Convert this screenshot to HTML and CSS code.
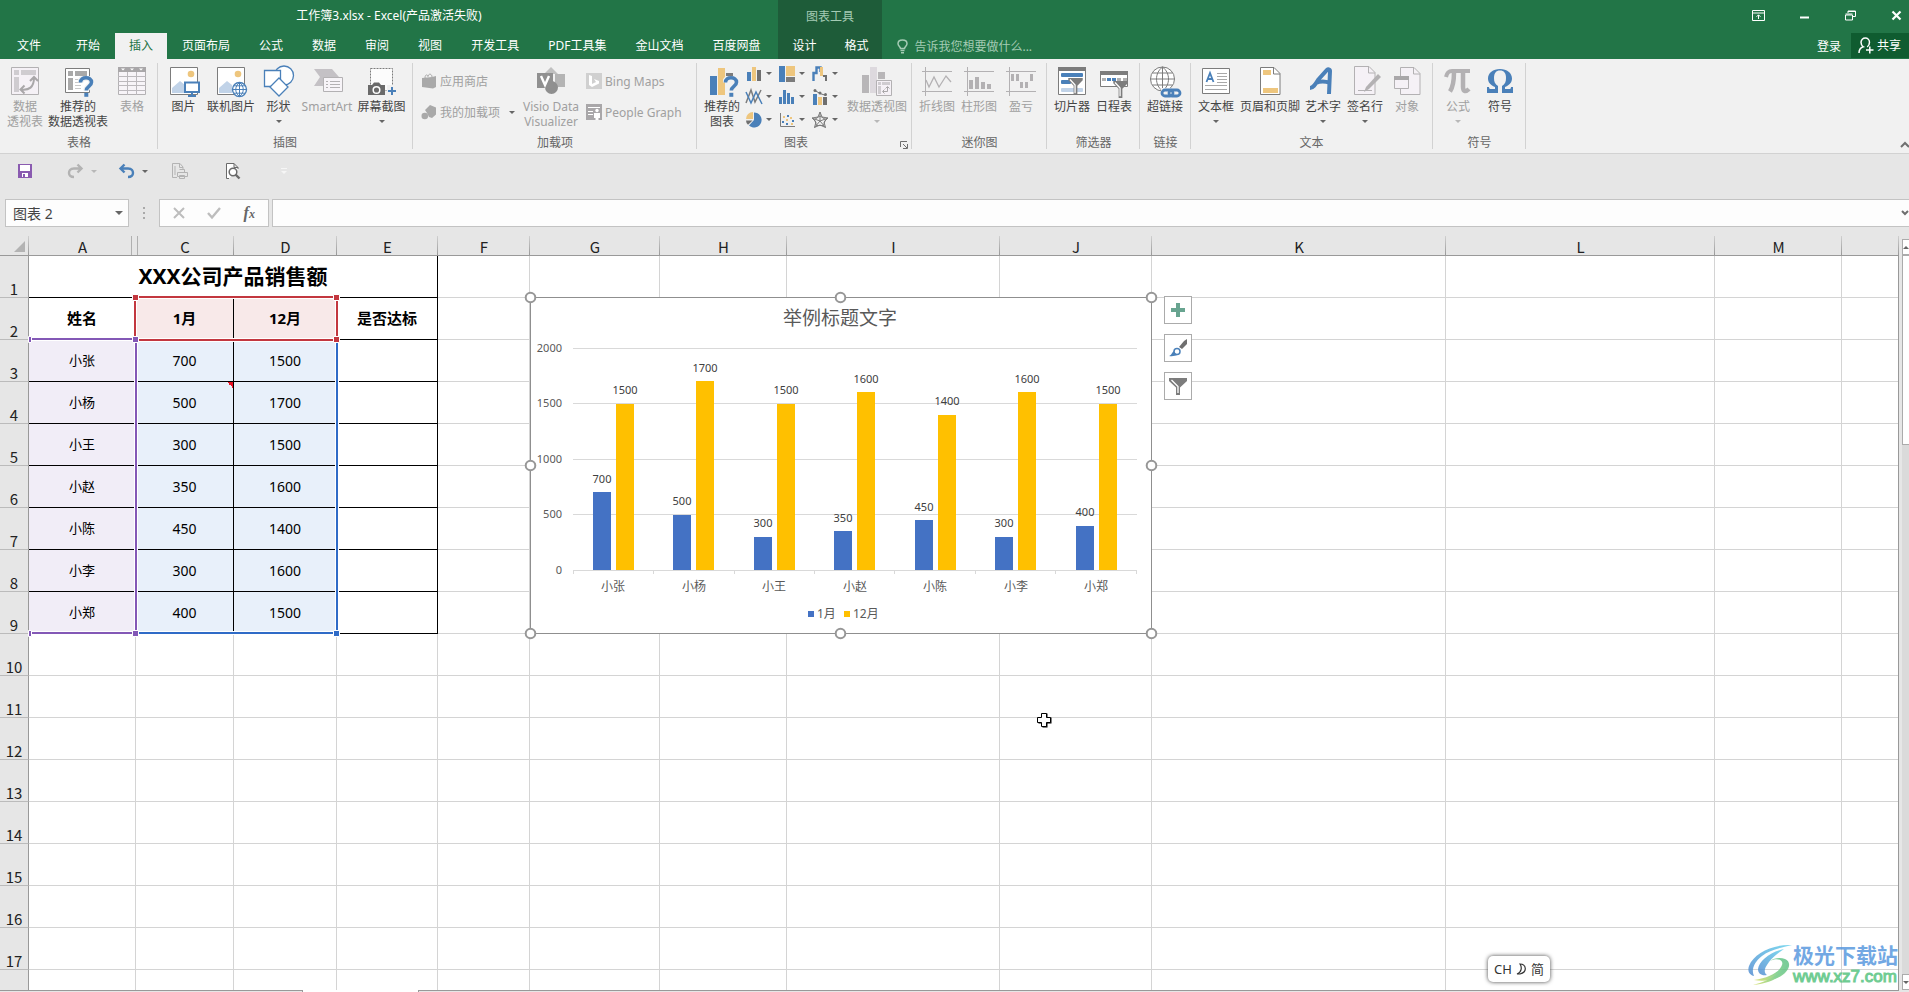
FILE: index.html
```html
<!DOCTYPE html>
<html lang="zh-CN">
<head>
<meta charset="utf-8">
<title>工作簿3.xlsx - Excel</title>
<link rel="stylesheet" href="styles.css">
</head>
<body>
<svg class="defs" aria-hidden="true">
  <defs>
    <symbol id="q" viewBox="0 0 16 21"><path d="M2.500 6.500C2.500 3 5 1.800 8 1.800s5.500 1.400 5.500 4.400c0 4.300-5.200 4-5.200 8.300" fill="none" stroke="#f1f1f1" stroke-width="6"/><path d="M2.500 6.500C2.500 3 5 1.800 8 1.800s5.500 1.400 5.500 4.400c0 4.300-5.200 4-5.200 8.300" fill="none" stroke="#4a80b9" stroke-width="3.600"/><path d="M6.300 16.800h4v4h-4z" fill="#4a80b9"/></symbol>
    <symbol id="funnel" viewBox="0 0 17 20"><path d="M0 0h17v2.500l-6.300 6.500V20H6.300V9L0 2.500z" fill="#7c7c7c"/><path d="M2 1.800l6 6.500V18" fill="none" stroke="#fff" stroke-width="1.500"/></symbol>
  </defs>
</svg>

<header class="top">
  <div class="titlebar">
    <div class="doc-title">工作簿3.xlsx - Excel(产品激活失败)</div>
    <div class="ctx-title">图表工具</div>
    <div class="win">
      <button aria-label="功能区显示选项"><svg width="13" height="11"><path d="M.5.5h12v10H.5zM.5 3h12M6.500 9V5M4.500 6.800l2-2 2 2" fill="none" stroke="#fff"/></svg></button>
      <button aria-label="最小化"><svg width="13" height="11"><path d="M2 6.500h9v2H2z" fill="#fff"/></svg></button>
      <button aria-label="还原"><svg width="13" height="11"><path d="M1.500 5h7v5h-7zM1.500 4h7M4 3V1h7.500v5.500H9M4 1.500h7" fill="none" stroke="#fff"/></svg></button>
      <button aria-label="关闭"><svg width="13" height="11"><path d="M2.500 1.500l8 8M10.500 1.500l-8 8" stroke="#fff" stroke-width="2.200"/></svg></button>
    </div>
  </div>
  <nav class="tabs">
    <button class="tab file">文件</button>
    <button class="tab">开始</button>
    <button class="tab active">插入</button>
    <button class="tab">页面布局</button>
    <button class="tab">公式</button>
    <button class="tab">数据</button>
    <button class="tab">审阅</button>
    <button class="tab">视图</button>
    <button class="tab">开发工具</button>
    <button class="tab">PDF工具集</button>
    <button class="tab">金山文档</button>
    <button class="tab">百度网盘</button>
    <div class="ctx-tabs"><button class="tab">设计</button><button class="tab">格式</button></div>
    <button class="tell"><svg width="11" height="15" viewBox="0 0 11 15"><path d="M3.500 9.500C3.500 7.800 1 7 1 4.700 1 2.400 3 1 5.500 1S10 2.400 10 4.700c0 2.300-2.500 3.100-2.500 4.800zM3.500 11.500h4M4 13.800h3" fill="none" stroke="#a4cbb4" stroke-width="1.500"/></svg><span>告诉我您想要做什么...</span></button>
    <button class="login">登录</button>
    <button class="share"><svg width="16" height="17" viewBox="0 0 16 17"><path d="M1 16c0-3.500 1.800-5.500 4.300-6.200C3.500 8.700 3 7 3 5.300 3 2.700 5 1 7.300 1s4.200 1.700 4.200 4.300c0 1.700-.6 3.500-2.300 4.500M8 13h7.500M11.800 9.500V16.500" fill="none" stroke="#fff" stroke-width="1.500"/></svg><span>共享</span></button>
  </nav>
</header>

<section class="ribbon" aria-label="插入">
  <div class="group g-table">
    <div class="items">
      <button class="big off w42"><svg width="32" height="32"><path d="M2.500 2.500h27v27h-27z" fill="#f5f1f6" stroke="#b3b1b3"/><path d="M5 5h5v5H5zM12 5h15v5H12zM5 12h5v15H5z" fill="#cfccd0"/><path d="M12 24.500c8 1 13-2 13-12M15.500 20.500l-4 4 4 4M21 16l4-4 4 4" fill="none" stroke="#a9a7a9" stroke-width="2"/></svg><span>数据</span><span>透视表</span></button>
      <button class="big w64"><svg width="32" height="32"><path d="M3.500 3.500h24v24h-24z" fill="#fff" stroke="#7c7c7c"/><path d="M6 6h5v5H6zM13 6h12v5H13zM6 13h5v12H6z" fill="#a9a9a9"/><path d="M13 14.500h8M13 17.500h6M13 20.500h6M13 23.500h6" stroke="#c8c8c8"/><use href="#q" x="16" y="11" width="16" height="21"/></svg><span>推荐的</span><span>数据透视表</span></button>
      <button class="big off w44"><svg width="32" height="32"><path d="M2.500 2.500h27v27h-27z" fill="#f7f4f8" stroke="#b3b1b3"/><path d="M2 2h28v5H2z" fill="#a9a7a9"/><path d="M5 3.500h4l-2 2zM14 3.500h4l-2 2zM23 3.500h4l-2 2z" fill="#fff"/><path d="M2 11.500h28M2 16.500h28M2 20.500h28M2 25.500h28M11.500 7v23M20.500 7v23" stroke="#bcb9bd"/></svg><span>表格</span></button>
    </div>
    <div class="glabel">表格</div>
  </div>

  <div class="group g-illus">
    <div class="items">
      <button class="big w45"><svg width="32" height="32"><path d="M2.500 2.500h27v27h-27z" fill="#fff" stroke="#7c7c7c"/><circle cx="23" cy="9" r="3.300" fill="#eec67e"/><path d="M4 28V23l8-7 5 4v8z" fill="#c1d3e8"/><path d="M17 17.500h14v9.500H17z" fill="#fff" stroke="#4a80b9" stroke-width="2"/><path d="M23 28h2v2h3v2h-8v-2h3z" fill="#4a80b9"/></svg><span>图片</span></button>
      <button class="big w50"><svg width="32" height="32"><path d="M2.500 2.500h27v27h-27z" fill="#fff" stroke="#7c7c7c"/><circle cx="23" cy="9" r="3.300" fill="#eec67e"/><path d="M4 28V23l8-7 5 4v8z" fill="#c1d3e8"/><circle cx="24.500" cy="24.500" r="7" fill="#fff" stroke="#4a80b9" stroke-width="1.400"/><path d="M24.500 17.500v14M17.500 24.500h14M19 20.800h11M19 28.200h11M24.500 17.500c-5 4-5 10 0 14M24.500 17.500c5 4 5 10 0 14" fill="none" stroke="#4a80b9"/></svg><span>联机图片</span></button>
      <button class="big w45"><svg width="32" height="32"><circle cx="21" cy="10.500" r="9.500" fill="#fff" stroke="#4a80b9" stroke-width="1.300"/><path d="M1.500 5.500h16v16h-16z" fill="#fff" stroke="#4a80b9" stroke-width="1.300"/><path d="M16 13l9 9-9 9-9-9z" fill="#fff" stroke="#4a80b9" stroke-width="1.300"/></svg><span>形状</span><i class="caret"></i></button>
      <button class="big off w52"><svg width="32" height="32"><path d="M3 4h18l7 8-6 9H3l6-9z" fill="#c4c1c5"/><path d="M12.500 12.500h19v14h-19z" fill="#f7f4f8" stroke="#b3b1b3"/><path d="M15 16.500h2M15 19.500h2M15 22.500h2M19 16.500h10M19 19.500h10M19 22.500h10" stroke="#b3b1b3"/></svg><span>SmartArt</span></button>
      <button class="big w57"><svg width="32" height="32"><path d="M4.500 3.500h22v22h-22z" fill="#fcfcfc" stroke="#7c7c7c" stroke-dasharray="2 1"/><path d="M2 20h4l2-2.500h5l2 2.500h4v10H2z" fill="#6a6a6a"/><circle cx="10.500" cy="25" r="3.300" fill="#6a6a6a" stroke="#fff" stroke-width="1.500"/><path d="M21 20h10v10H21z" fill="#f1f1f1"/><path d="M25 22h2v3h3v2h-3v3h-2v-3h-3v-2h3z" fill="#4a80b9"/></svg><span>屏幕截图</span><i class="caret"></i></button>
    </div>
    <div class="glabel">插图</div>
  </div>

  <div class="group g-addin">
    <div class="items">
      <div class="stack w100">
        <button class="small off"><svg width="16" height="16"><path d="M1 5l10-1 4-1v11l-3 1.500L1 14z" fill="#a9a9a9"/><path d="M4 5c0-4 3-4 3-1M7 3c1-3 4-2 4 1" fill="none" stroke="#a9a9a9"/></svg><span>应用商店</span></button>
        <button class="small off"><svg width="16" height="16"><path d="M9 1l6 2.500v7L11 14l-3-1-2-4-2-3z" fill="#a9a9a9"/><circle cx="3.800" cy="12" r="3.300" fill="#a9a9a9"/></svg><span>我的加载项</span><i class="caret"></i></button>
      </div>
      <button class="big off w60"><svg width="32" height="32"><path d="M16 2l7 7H9z" fill="#c0c0c0"/><path d="M20 9h10v13H20z" fill="#b4b4b4"/><circle cx="16.500" cy="22.500" r="6.500" fill="#8f8f8f"/><path d="M2 8h16v15H2z" fill="#909090"/><path d="M6 11l4 9 4-9" fill="none" stroke="#fff" stroke-width="2.400"/></svg><span>Visio Data</span><span>Visualizer</span></button>
      <div class="stack apps">
        <button class="small off"><svg width="16" height="16"><path d="M0 0h16v16H0z" fill="#d0d0d0"/><path d="M3 2l3 1v8l4-2-2-3 5 2v2.500L6 14l-3-2z" fill="#fff"/></svg><span>Bing Maps</span></button>
        <button class="small off"><svg width="16" height="16"><path d="M0 0h16v16H0z" fill="#a9a7a9"/><path d="M2 3.500h12M2 7.500h5M2 10.500h5" stroke="#fff"/><circle cx="11" cy="6.500" r="1.700" fill="#fff"/><path d="M8 9h6v5h-1.500v2h-3v-2H8z" fill="#fff"/></svg><span>People Graph</span></button>
      </div>
    </div>
    <div class="glabel">加载项</div>
  </div>

  <div class="group g-chart">
    <div class="items">
      <button class="big w44"><svg width="32" height="32"><path d="M4 11h7v19H4z" fill="#4a80b9"/><path d="M12 3h7v27h-7z" fill="#eec67e"/><path d="M20 8h7v5h-7z" fill="#7c7c7c"/><use href="#q" x="17" y="11" width="16" height="21"/></svg><span>推荐的</span><span>图表</span></button>
      <div class="minis">
        <button class="mini" aria-label="柱形图"><svg width="16" height="16"><path d="M1 6h4v9H1z" fill="#4a80b9"/><path d="M6 1h4v14H6z" fill="#eec67e"/><path d="M11 4h4v11h-4z" fill="#6f6f6f"/></svg><i class="caret"></i></button>
        <button class="mini" aria-label="层次结构图"><svg width="16" height="16"><path d="M0 0h6v16H0z" fill="#4a80b9"/><path d="M7 0h9v10H7z" fill="#eec67e"/><path d="M7 11h9v5H7z" fill="#7c7c7c"/></svg><i class="caret"></i></button>
        <button class="mini" aria-label="瀑布图"><svg width="16" height="16"><path d="M1.500 15V7h3V1.500h4V6" fill="none" stroke="#4a80b9" stroke-width="2.400"/><path d="M8 1h3v9H8z" fill="#eec67e"/><path d="M11 9h4v6h-2v-4h-2z" fill="#6f6f6f"/></svg><i class="caret"></i></button>
        <button class="mini" aria-label="折线图"><svg width="16" height="16"><path d="M0 14L5 1l4 12 6-12" fill="none" stroke="#7c7c7c" stroke-width="1.500"/><path d="M0 3l5 11 5-11 6 12" fill="none" stroke="#4a80b9" stroke-width="1.500"/></svg><i class="caret"></i></button>
        <button class="mini" aria-label="直方图"><svg width="16" height="16"><path d="M0 8h3v7H0zM4 1h3v14H4zM8 4h3v11H8zM12 8h3v7h-3z" fill="#4a80b9"/></svg><i class="caret"></i></button>
        <button class="mini" aria-label="组合图"><svg width="16" height="16"><path d="M1 5h4v11H1z" fill="#4a80b9"/><path d="M6 8h4v8H6z" fill="#eec67e"/><path d="M11 8h4v8h-4z" fill="#6f6f6f"/><path d="M3 1.500l5 3 6 2" fill="none" stroke="#6f6f6f"/><circle cx="3" cy="1.500" r="1.500" fill="#6f6f6f"/><circle cx="8" cy="4" r="1.500" fill="#6f6f6f"/><circle cx="13.500" cy="5.500" r="1.500" fill="#6f6f6f"/></svg><i class="caret"></i></button>
        <button class="mini" aria-label="饼图"><svg width="16" height="16"><path d="M8 .5a7.500 7.500 0 1 1-5 13L8 8z" fill="#4a80b9"/><path d="M7 0v7H0a7 7 0 0 1 7-7z" fill="#eec67e"/><path d="M0 8.500h6.500L2 12.800A6 6 0 0 1 0 8.500z" fill="#6f6f6f"/></svg><i class="caret"></i></button>
        <button class="mini" aria-label="散点图"><svg width="16" height="16"><path d="M1.500 1v13.500H16" fill="none" stroke="#7c7c7c"/><path d="M3 9h2v2H3zM8 3h2v2H8zM7 11h2v2H7zM13 8h2v2h-2z" fill="#4a80b9"/><path d="M4 4h2v2H4zM7 7h2v2H7zM11 5h2v2h-2zM12 11h2v2h-2z" fill="#eec67e"/></svg><i class="caret"></i></button>
        <button class="mini" aria-label="雷达图"><svg width="16" height="16"><path d="M8 0v9M0 6l8 3 8-3M2.500 15.500L8 9l5.500 6.500M8 4l5.500 3.500-2 6h-7l-2-6zM8 0l2 5 6 1-4 4 1.500 5.500L8 13l-5.500 2.500L4 10 0 6l6-1z" fill="none" stroke="#7c7c7c"/></svg><i class="caret"></i></button>
      </div>
      <button class="big off w64"><svg width="32" height="32"><path d="M1 10h7v18H1zM17 7h7v7h-7z" fill="#b8b6b8"/><path d="M9 2h7v26H9z" fill="#ddd9de"/><path d="M15.500 15.500h15v15h-15z" fill="#f5f1f6" stroke="#b3b1b3"/><path d="M17 17h3v3h-3zM21 17h8v3h-8zM17 21h3v8h-3z" fill="#cfccd0"/><path d="M22 26.500h4.500V22M23.500 24.500l-2 2 2 2M24.500 23.500l2-2 2 2" fill="none" stroke="#a9a7a9"/></svg><span>数据透视图</span><i class="caret"></i></button>
    </div>
    <div class="glabel">图表</div>
    <button class="launcher" aria-label="图表选项"><svg width="8" height="8"><path d="M.5 6V.5H7M7.500 3v4.500H3M3 3l4 4" fill="none" stroke="#6f6f6f"/></svg></button>
  </div>

  <div class="group g-spark">
    <div class="items">
      <button class="big off w42"><svg width="32" height="32"><path d="M1 6.500h30M1 26.500h30M4.500 2v29" stroke="#b3b1b3"/><path d="M5 22l5-10 5 10 5-10 3 5M5 16l3 6 5-10 5 10 7-11 5 6" fill="none" stroke="none"/><path d="M5 15l3 7 5-10 5 10 7-11 5 6" fill="none" stroke="#b3b1b3" stroke-width="1.300"/></svg><span>折线图</span></button>
      <button class="big off w42"><svg width="32" height="32"><path d="M1 6.500h30M1 26.500h30M4.500 2v29" stroke="#b3b1b3"/><path d="M6 15h4v9H6zM12 12h4v12h-4zM18 17h4v7h-4zM24 19h4v5h-4z" fill="#b3b1b3"/></svg><span>柱形图</span></button>
      <button class="big off w42"><svg width="32" height="32"><path d="M1 6.500h30M1 26.500h30M4.500 2v29" stroke="#b3b1b3"/><path d="M6 9h3v7H6zM11 9h3v7h-3zM15 17h3v6h-3zM20 17h3v6h-3zM25 9h3v7h-3z" fill="#b3b1b3"/></svg><span>盈亏</span></button>
    </div>
    <div class="glabel">迷你图</div>
  </div>

  <div class="group g-filter">
    <div class="items">
      <button class="big w42"><svg width="32" height="32"><path d="M2.500 2.500h27v27h-27z" fill="#fff" stroke="#7c7c7c"/><path d="M2 2h28v4H2z" fill="#7c7c7c"/><rect x="5" y="8" width="22" height="4" rx="1" fill="#4a80b9"/><rect x="5" y="15" width="10" height="4" rx="1" fill="#4a80b9"/><rect x="5" y="23" width="22" height="4" rx="1" fill="#c1d3e8"/><use href="#funnel" x="11" y="13" width="17" height="17"/></svg><span>切片器</span></button>
      <button class="big w42"><svg width="32" height="32"><path d="M2.500 6.500h27v15h-27z" fill="#fff" stroke="#7c7c7c"/><path d="M2 6h28v4H2z" fill="#7c7c7c"/><path d="M4 13h4v3H4zM19 13h4v3h-4zM25 13h4v3h-4z" fill="#b0b0b0"/><path d="M9 13h4v3H9zM14 13h4v3h-4z" fill="#4a80b9"/><use href="#funnel" x="14" y="16" width="17" height="17"/></svg><span>日程表</span></button>
    </div>
    <div class="glabel">筛选器</div>
  </div>

  <div class="group g-link">
    <div class="items">
      <button class="big w42"><svg width="32" height="32"><circle cx="13.500" cy="14" r="12" fill="#fff" stroke="#7c7c7c"/><path d="M13.500 2v24M1.500 14h24M3.500 8h20M3.500 20h20M13.500 2c-8 6-8 18 0 24M13.500 2c8 6 8 18 0 24" fill="none" stroke="#7c7c7c"/><path d="M12 23h20v9H12z" fill="#f1f1f1"/><g fill="none" stroke="#4a80b9" stroke-width="2.800"><rect x="13" y="25" width="11" height="6" rx="3"/><rect x="20" y="25" width="11" height="6" rx="3"/></g></svg><span>超链接</span></button>
    </div>
    <div class="glabel">链接</div>
  </div>

  <div class="group g-text">
    <div class="items">
      <button class="big w44"><svg width="32" height="32"><path d="M2.500 3.500h27v25h-27z" fill="#fff" stroke="#7c7c7c"/><path d="M6.500 17l3.500-9 3.500 9M7.700 14h4.700" fill="none" stroke="#4a80b9" stroke-width="1.800"/><path d="M17 8.500h10M17 11.500h10M17 14.500h10M17 17.500h10M5 20.500h22M5 24.500h22" stroke="#a9a9a9"/></svg><span>文本框</span><i class="caret"></i></button>
      <button class="big w64"><svg width="32" height="32"><path d="M6.500 2.500H20l6 6v21H6.500z" fill="#fff" stroke="#7c7c7c"/><path d="M19.500 2.500V9H26" fill="none" stroke="#7c7c7c"/><path d="M9 5h8v5H9zM9 23h15v5H9z" fill="#eec67e"/></svg><span>页眉和页脚</span></button>
      <button class="big w42"><svg width="32" height="32"><path d="M3 23c3 0 5-3 8-8l9-10c1-1 3-1 3 1l-1 23M9 18c4-2 9-2 14 0" fill="none" stroke="#4a80b9" stroke-width="4"/></svg><span>艺术字</span><i class="caret"></i></button>
      <button class="big w42"><svg width="32" height="32"><path d="M5.500 1.500H20l6 6v22H5.500z" fill="#f5f1f6" stroke="#b3b1b3"/><path d="M19.500 2v6H26M9 25.500h14" fill="none" stroke="#b3b1b3"/><path d="M29 9l3 3-12 12-5 3 2-5z" fill="#b3b1b3"/></svg><span>签名行</span><i class="caret"></i></button>
      <button class="big off w42"><svg width="32" height="32"><path d="M9.500 2.500H23l6 6v21H9.500z" fill="#f5f1f6" stroke="#b3b1b3"/><path d="M22.500 3v6H29" fill="none" stroke="#b3b1b3"/><path d="M3.500 11.500h14v12h-14z" fill="#f5f1f6" stroke="#b3b1b3"/><path d="M3 11h15v4H3z" fill="#a9a7a9"/></svg><span>对象</span></button>
    </div>
    <div class="glabel">文本</div>
  </div>

  <div class="group g-symbol">
    <div class="items">
      <button class="big off w42"><svg width="32" height="32"><path d="M4 12c1-5 3-6 6-6h18" fill="none" stroke="#b3b1b3" stroke-width="4"/><path d="M12 7c0 9-1 15-4 19.500M21 7v15c0 5 3 5 6 2" fill="none" stroke="#b3b1b3" stroke-width="4.500"/></svg><span>公式</span><i class="caret"></i></button>
      <button class="big w42"><svg width="32" height="32"><path d="M3 22h2c0 2 1 2 2 2h4v-2C6 20 4 17 4 13.500 4 8 9 4 16 4s12 4 12 9.500C28 17 26 20 21 22v2h4c1 0 2 0 2-2h2v6H18v-7c3-2 4-4 4-8 0-5-2-7.500-6-7.500s-6 2.500-6 7.500c0 4 1 6 4 8v7H3z" fill="#4a80b9"/></svg><span>符号</span></button>
    </div>
    <div class="glabel">符号</div>
  </div>
  <button class="collapse" aria-label="折叠功能区"><svg width="8" height="6"><path d="M0 5l4-4 4 4" fill="none" stroke="#6f6f6f" stroke-width="2"/></svg></button>
</section>

<section class="qat">
  <button aria-label="保存" class="q-save"><svg width="14" height="14"><path d="M0 0h14v14H0z" fill="#8a5bb0"/><path d="M2 1h10v6H2zM4 9h6v4H4z" fill="#fff"/><path d="M5 10h2v3H5z" fill="#8a5bb0"/></svg></button>
  <button aria-label="恢复" class="q-redo off"><svg width="15" height="14"><path d="M14 4.500H6C2 4.500 1 7 1 9s1.500 4 5 4M9.500.5l4 4-4 4" fill="none" stroke="#b3b3b3" stroke-width="2.400"/></svg><i class="caret"></i></button>
  <button aria-label="撤消" class="q-undo"><svg width="15" height="14"><path d="M1 4.500h8c4 0 5 2.500 5 4.500s-1.500 4-5 4M5.500.5l-4 4 4 4" fill="none" stroke="#4a80b9" stroke-width="2.400"/></svg><i class="caret"></i></button>
  <button aria-label="快速打印" class="q-print"><svg width="17" height="17"><path d="M5 14.500H.5V.5H8L11 4v2M7.500 1v3.500H11M3 3v9" fill="none" stroke="#b3b3b3"/><path d="M5.500 9.500h10v4h-10zM7.500 6.500h5v3M7.500 12.500h5v3h-5z" fill="#e6e6e6" stroke="#b3b3b3"/></svg></button>
  <button aria-label="打印预览" class="q-view"><svg width="15" height="17"><path d="M3 15.500H.5V.5H8l4 4V6M8 .5v4h4" fill="#fff" stroke="#6a6a6a"/><circle cx="7" cy="9" r="3.800" fill="#fff" stroke="#6a6a6a" stroke-width="1.500"/><path d="M9.500 11.500l4 4" stroke="#6a6a6a" stroke-width="2.400"/></svg></button>
  <button aria-label="自定义" class="q-more"><svg width="6" height="7"><path d="M0 .5h6" stroke="#f6f6f6"/><path d="M0 3h6L3 6z" fill="#f6f6f6"/></svg></button>
</section>

<section class="formula">
  <div class="namebox"><input aria-label="名称框" value="图表 2"><button aria-label="名称列表"><i class="caret wide"></i></button></div>
  <svg class="grip" width="3" height="12"><path d="M0 0h2v2H0zM0 5h2v2H0zM0 10h2v2H0z" fill="#a9a9a9"/></svg>
  <div class="fx">
    <button aria-label="取消"><svg width="12" height="12"><path d="M1 1l10 10M11 1L1 11" stroke="#bdbdbd" stroke-width="2"/></svg></button>
    <button aria-label="输入"><svg width="14" height="12"><path d="M1 6l4 4.500L13 1" fill="none" stroke="#bdbdbd" stroke-width="2.400"/></svg></button>
    <button aria-label="插入函数" class="fxbtn">f<small>x</small></button>
  </div>
  <div class="fbar"><input aria-label="编辑栏"><button aria-label="展开编辑栏"><svg width="8" height="6"><path d="M1 1l3 3 3-3" fill="none" stroke="#6f6f6f" stroke-width="2"/></svg></button></div>
</section>

<main class="sheet">
  <div class="grid">
    <table>
      <colgroup><col class="c0"><col class="cA"><col class="cC"><col class="cD"><col class="cE"><col class="cF"><col class="cG"><col class="cH"><col class="cI"><col class="cJ"><col class="cK"><col class="cL"><col class="cM"><col></colgroup>
      <thead><tr><th class="corner"><svg width="11" height="11"><path d="M11 0v11H0z" fill="#b3b3b3"/></svg></th><th class="hidden-next">A</th><th>C</th><th>D</th><th>E</th><th>F</th><th>G</th><th>H</th><th>I</th><th>J</th><th>K</th><th>L</th><th>M</th><th></th></tr></thead>
      <tbody>
        <tr><th>1</th><td colspan="4" class="k title">XXX公司产品销售额</td><td><td><td><td><td><td><td><td><td></tr>
        <tr><th>2</th><td class="k h">姓名</td><td class="k h red">1月</td><td class="k h red">12月</td><td class="k h">是否达标</td><td><td><td><td><td><td><td><td><td></tr>
        <tr><th>3</th><td class="k pur">小张</td><td class="k blu">700</td><td class="k blu">1500</td><td class="k"></td><td><td><td><td><td><td><td><td><td></tr>
        <tr><th>4</th><td class="k pur">小杨</td><td class="k blu note">500</td><td class="k blu">1700</td><td class="k"></td><td><td><td><td><td><td><td><td><td></tr>
        <tr><th>5</th><td class="k pur">小王</td><td class="k blu">300</td><td class="k blu">1500</td><td class="k"></td><td><td><td><td><td><td><td><td><td></tr>
        <tr><th>6</th><td class="k pur">小赵</td><td class="k blu">350</td><td class="k blu">1600</td><td class="k"></td><td><td><td><td><td><td><td><td><td></tr>
        <tr><th>7</th><td class="k pur">小陈</td><td class="k blu">450</td><td class="k blu">1400</td><td class="k"></td><td><td><td><td><td><td><td><td><td></tr>
        <tr><th>8</th><td class="k pur">小李</td><td class="k blu">300</td><td class="k blu">1600</td><td class="k"></td><td><td><td><td><td><td><td><td><td></tr>
        <tr><th>9</th><td class="k pur">小郑</td><td class="k blu">400</td><td class="k blu">1500</td><td class="k"></td><td><td><td><td><td><td><td><td><td></tr>
        <tr><th>10</th><td><td><td><td><td><td><td><td><td><td><td><td><td></tr>
        <tr><th>11</th><td><td><td><td><td><td><td><td><td><td><td><td><td></tr>
        <tr><th>12</th><td><td><td><td><td><td><td><td><td><td><td><td><td></tr>
        <tr><th>13</th><td><td><td><td><td><td><td><td><td><td><td><td><td></tr>
        <tr><th>14</th><td><td><td><td><td><td><td><td><td><td><td><td><td></tr>
        <tr><th>15</th><td><td><td><td><td><td><td><td><td><td><td><td><td></tr>
        <tr><th>16</th><td><td><td><td><td><td><td><td><td><td><td><td><td></tr>
        <tr><th>17</th><td><td><td><td><td><td><td><td><td><td><td><td><td></tr>
        <tr><th></th><td><td><td><td><td><td><td><td><td><td><td><td><td></tr>
      </tbody>
    </table>

    <svg class="ranges" width="345" height="412" aria-hidden="true">
      <g fill="none" stroke="#fff" stroke-width="4"><path d="M29 111H136V405H29M136 405H337V112"/><path d="M135 69H337V112H135z"/></g>
      <g fill="none" stroke-width="2"><path d="M136 405H337V112" stroke="#2f6bc7"/><path d="M29 111H136V405H29" stroke="#8358b6"/><path d="M135 69H337V112H135z" stroke="#c3373f"/></g>
      <g stroke="#fff"><path d="M132.500 66.500h6v6h-6zM333.500 66.500h6v6h-6zM333.500 108.500h6v6h-6z" fill="#c3373f"/><path d="M132.500 108.500h6v6h-6zM132.500 402.500h6v6h-6zM28.500 108.500h3v6h-3zM28.500 402.500h3v6h-3z" fill="#8358b6"/><path d="M333.500 402.500h6v6h-6z" fill="#2f6bc7"/></g>
    </svg>

    <svg class="chart" width="640" height="356" viewBox="520 287 640 356" role="img" aria-label="举例标题文字">
      <path d="M530.500 297.500h621v336h-621z" fill="#fff" stroke="#8f8f8f"/>
      <text class="ctitle" x="840" y="325">举例标题文字</text>
      <path d="M573 348.500h564M573 403.500h564M573 459.500h564M573 514.500h564M573 570.500h564M573.500 570v4M653.500 570v4M734.500 570v4M814.500 570v4M894.500 570v4M975.500 570v4M1055.500 570v4M1136.500 570v4" stroke="#d9d9d9"/>
      <path fill="#4472c4" d="M593 492h18v78h-18zM673 515h18v55h-18zM754 537h18v33h-18zM834 531h18v39h-18zM915 520h18v50h-18zM995 537h18v33h-18zM1076 526h18v44h-18z"/>
      <path fill="#ffc000" d="M616 404h18v166h-18zM696 381h18v189h-18zM777 404h18v166h-18zM857 392h18v178h-18zM938 415h18v155h-18zM1018 392h18v178h-18zM1099 404h18v166h-18z"/>
      <g class="axis"><text x="562" y="352">2000</text><text x="562" y="407">1500</text><text x="562" y="463">1000</text><text x="562" y="518">500</text><text x="562" y="574">0</text></g>
      <g class="val"><text x="602" y="483">700</text><text x="682" y="505">500</text><text x="763" y="527">300</text><text x="843" y="522">350</text><text x="924" y="511">450</text><text x="1004" y="527">300</text><text x="1085" y="516">400</text><text x="625" y="394">1500</text><text x="705" y="372">1700</text><text x="786" y="394">1500</text><text x="866" y="383">1600</text><text x="947" y="405">1400</text><text x="1027" y="383">1600</text><text x="1108" y="394">1500</text></g>
      <g class="cat"><text x="613" y="591">小张</text><text x="694" y="591">小杨</text><text x="774" y="591">小王</text><text x="855" y="591">小赵</text><text x="935" y="591">小陈</text><text x="1016" y="591">小李</text><text x="1096" y="591">小郑</text></g>
      <path d="M808 611h6v6h-6z" fill="#4472c4"/><path d="M844 611h6v6h-6z" fill="#ffc000"/>
      <g class="leg"><text x="817" y="618">1月</text><text x="853" y="618">12月</text></g>
      <g fill="#fff" stroke="#979797" stroke-width="2"><circle cx="530.500" cy="297.500" r="4.800"/><circle cx="840.500" cy="297.500" r="4.800"/><circle cx="1151.500" cy="297.500" r="4.800"/><circle cx="530.500" cy="465.500" r="4.800"/><circle cx="1151.500" cy="465.500" r="4.800"/><circle cx="530.500" cy="633.500" r="4.800"/><circle cx="840.500" cy="633.500" r="4.800"/><circle cx="1151.500" cy="633.500" r="4.800"/></g>
    </svg>

    <div class="chart-tools">
      <button aria-label="图表元素"><svg width="14" height="14"><path d="M5 0h4v5h5v4H9v5H5V9H0V5h5z" fill="#68a490"/></svg></button>
      <button aria-label="图表样式"><svg width="18" height="18"><path d="M18 0v5l-5 5-3-2 5-6z" fill="#6f6f6f"/><path d="M9.500 8.500l3 2" stroke="#fff"/><circle cx="8" cy="12.500" r="3" fill="#fff" stroke="#4a80b9" stroke-width="1.500"/><path d="M0 17c2 0 3-4 5-5 0 2 3 3 3 4-1 1-5 1.500-8 1z" fill="#4a80b9"/></svg></button>
      <button aria-label="图表筛选器"><svg width="18" height="17" viewBox="0 0 18 17"><path d="M0 0h18v3l-7 6.500V17H7V9.500L0 3z" fill="#7c7c7c"/><path d="M2.500 2l6.500 6.500V15" fill="none" stroke="#fff" stroke-width="1.300"/></svg></button>
    </div>

    <svg class="cursor" width="17" height="17" aria-hidden="true"><path d="M6.500 1.500h5v4h4v6h-4v4h-5v-4h-4v-5h4z" fill="#000"/><path d="M5.500 1.500h5v4h4v5h-4v4h-5v-4h-4v-5h4z" fill="#fff" stroke="#000"/></svg>

    <div class="ime"><span>CH</span><svg width="11" height="12"><path d="M4 1c6 0 8 8 0 10H1c5-2 5-7 3-10z" fill="none" stroke="#333" stroke-width="1.200"/></svg><span>简</span></div>

    <div class="mark">
      <svg width="45" height="42" viewBox="0 0 45 42">
        <defs><linearGradient id="mb" x1="0" y1="1" x2="1" y2="0"><stop offset="0" stop-color="#4a86cf"/><stop offset="1" stop-color="#5fd0ec"/></linearGradient><linearGradient id="mg" x1="0" y1="1" x2="1" y2="0"><stop offset="0" stop-color="#d6dc5c"/><stop offset=".5" stop-color="#6cc97c"/><stop offset="1" stop-color="#53bd83"/></linearGradient></defs>
        <path d="M44 1C25 0 6 9 1 22c-2 6 1 9 5 10-3-6 0-14 8-20C22 6 32 4 44 1z" fill="url(#mb)"/>
        <path d="M36 5C22 8 11 17 10 25c0 5 4 7 9 6-3-2-3-6 0-10 3-5 8-10 17-16z" fill="url(#mb)"/>
        <path d="M22 17c7-4 14-1 12 4-3 8-14 13-28 15 10 2 24 0 31-7 6-6 5-12 0-14-5-2-11-1-15 2z" fill="url(#mg)"/>
        <path d="M40 20c-1 9-13 19-35 21 12-3 26-9 35-21z" fill="url(#mg)"/>
      </svg>
      <div class="mark-text"><b>极光下载站</b><span>www.xz7.com</span></div>
    </div>
  </div>
  <div class="vscroll"><button aria-label="向上滚动"><i class="caret up"></i></button><div class="thumb"></div><div class="track"></div><button aria-label="向下滚动"><i class="caret"></i></button></div>
</main>
<footer class="sheet-tabs"><div class="before"></div><div class="current"></div><div class="after"></div></footer>
</body>
</html>
```
FILE: styles.css
```css
* { box-sizing: border-box; }
body {
  margin: 0;
  height: 100vh;
  display: flex;
  flex-direction: column;
  overflow: hidden;
  background: #e6e6e6;
  color: #444;
  font: 12px/15px "Noto Sans", "Noto Sans CJK SC", sans-serif;
}
button, input { font: inherit; color: inherit; border: 0; background: none; padding: 0; margin: 0; }
svg { display: block; flex: none; overflow: visible; }
.defs { position: absolute; width: 0; height: 0; }

.caret {
  width: 0;
  height: 0;
  border: 3px solid transparent;
  border-top-color: #666;
  border-bottom: 0;
}
.caret.wide { border-width: 4px 4px 0; }
.caret.up { border: 3px solid transparent; border-bottom-color: #666; border-top: 0; }
.off .caret { border-top-color: #b8b8b8; }

/* title bar and tabs */
.top { background: #227547; color: #fff; flex: none; }
.titlebar { display: flex; height: 33px; }
.doc-title { width: 778px; text-align: center; line-height: 32px; }
.ctx-title { width: 104px; text-align: center; line-height: 33px; background: #1e5c39; color: #a4cbb4; }
.win { margin-left: auto; display: flex; align-items: center; gap: 33px; padding: 0 6px 3px 0; }
.tabs { display: flex; height: 26px; }
.tab { padding: 0 14px; margin-right: 1px; line-height: 24px; white-space: nowrap; }
.tab.file { padding: 0 17px; margin-right: 4px; }
.tab.active { background: #f1f1f1; color: #217346; }
.ctx-tabs { display: flex; width: 104px; margin-left: 3px; background: #1e5c39; }
.ctx-tabs .tab { margin: 0; }
.tell { display: flex; align-items: center; gap: 6px; margin-left: 15px; color: #a4cbb4; }
.login { margin-left: auto; margin-right: 10px; }
.share { display: flex; align-items: center; gap: 3px; width: 58px; height: 25px; padding-left: 7px; background: #0f5c30; }

/* ribbon */
.ribbon { display: flex; flex: none; height: 95px; background: #f1f1f1; border-bottom: 1px solid #d2d2d2; position: relative; }
.group { display: flex; flex-direction: column; position: relative; flex: none; padding-left: 4px; }
.group::after { content: ""; position: absolute; right: 0; top: 4px; bottom: 4px; width: 1px; background: #d2d2d2; }
.items { display: flex; height: 74px; }
.glabel { text-align: center; line-height: 20px; color: #666; margin-left: -4px; }
.g-table { width: 158px; }
.g-illus { width: 255px; padding-left: 3px; }
.g-addin { width: 284px; padding-left: 8px; }
.g-addin .glabel { margin-left: -8px; }
.g-chart { width: 215px; padding-left: 3px; }
.g-chart .glabel { padding-right: 16px; }
.g-spark { width: 135px; }
.g-filter { width: 93px; }
.g-link { width: 51px; }
.g-text { width: 242px; padding-left: 3px; }
.g-symbol { width: 93px; }
.big { display: flex; flex-direction: column; align-items: center; flex: none; padding-top: 6px; white-space: nowrap; }
.big svg { margin-bottom: 2px; }
.big .caret { margin-top: 6px; }
.big.off, .small.off { color: #a0a0a0; }
.w42 { width: 42px; }
.w44 { width: 44px; }
.w45 { width: 45px; }
.w50 { width: 50px; }
.w52 { width: 52px; }
.w57 { width: 57px; }
.w60 { width: 60px; }
.w64 { width: 64px; }
.w100 { width: 100px; }
.stack { display: flex; flex-direction: column; gap: 15px; padding-top: 14px; }
.stack.apps { padding-left: 5px; }
.small { display: flex; align-items: center; gap: 3px; height: 16px; white-space: nowrap; }
.small .caret { margin-left: 6px; border-top-color: #666; }
.minis { display: grid; grid-template-columns: repeat(3, 33px); grid-auto-rows: 23px; padding: 3px 0 0 2px; align-content: start; }
.mini { display: flex; align-items: center; gap: 4px; }
.launcher { position: absolute; right: 4px; bottom: 4px; }
.collapse { position: absolute; right: 0; bottom: 5px; }

/* quick access */
.qat { display: flex; align-items: center; flex: none; height: 34px; padding-left: 18px; }
.qat button { display: flex; align-items: center; gap: 8px; }
.q-redo { margin-left: 36px; }
.q-undo { margin-left: 22px; }
.q-print { margin-left: 24px; }
.q-view { margin-left: 37px; }
.q-more { margin-left: 40px; }

/* formula bar */
.formula { display: flex; align-items: center; flex: none; height: 40px; padding: 11px 0 1px 5px; }
.namebox, .fx, .fbar { display: flex; align-items: center; height: 28px; background: #fdfdfd; border: 1px solid #c3c3c3; }
.namebox { width: 124px; padding-right: 5px; }
.namebox input { flex: 1; min-width: 0; padding-left: 7px; font-size: 14px; }
.namebox button { display: flex; }
.grip { margin: 0 13px 0 14px; }
.fx { width: 110px; justify-content: space-around; padding: 0 2px; }
.fxbtn { font: italic bold 16px/16px "Liberation Serif", serif; color: #666; }
.fxbtn small { font-size: 12px; }
.fbar { flex: 1; margin-left: 3px; border-right: 0; }
.fbar input { flex: 1; }

/* worksheet */
.sheet { display: flex; flex: 1; min-height: 0; }
.grid { flex: 1; position: relative; overflow: hidden; min-width: 0; background: linear-gradient(#e6e6e6, #e6e6e6) 0 0 / 100% 27px no-repeat #fff; }
.grid::after { content: ""; position: absolute; inset: 27px 0 0 auto; width: 1px; background: #999; }
table { width: 100%; table-layout: fixed; border-collapse: separate; border-spacing: 0; color: #000; }
.c0 { width: 29px; }
.cA { width: 107px; }
.cC { width: 98px; }
.cD { width: 103px; }
.cE { width: 101px; }
.cF { width: 92px; }
.cG { width: 130px; }
.cH { width: 127px; }
.cI { width: 213px; }
.cJ { width: 152px; }
.cK { width: 294px; }
.cL { width: 269px; }
.cM { width: 127px; }
th { padding: 0; font-weight: 400; font-size: 15px; font-family: "Noto Sans CJK SC", sans-serif; color: #222; background-color: #e6e6e6; }
thead th {
  position: relative;
  height: 28px;
  padding-top: 10px;
  line-height: 17px;
  border-bottom: 1px solid #999;
  background-image: linear-gradient(#cfcfcf, #999);
  background-size: 1px 19px;
  background-position: right bottom;
  background-repeat: no-repeat;
}
thead th.hidden-next { background-image: none; }
.hidden-next::after { content: ""; position: absolute; z-index: 1; right: -2px; bottom: 0; width: 5px; height: 19px; border: solid #b0b0b0; border-width: 0 1px; background: #e6e6e6; }
.corner svg { margin-left: 14px; }
tbody th { height: 42px; line-height: 16px; vertical-align: bottom; border-right: 1px solid #999; border-bottom: 1px solid #bbb; }
td { padding: 0; text-align: center; vertical-align: middle; font-size: 14px; border: solid #d4d4d4; border-width: 0 1px 1px 0; }
.k { border-color: #000; }
.title { font-size: 21px; font-weight: 700; line-height: 24px; padding-bottom: 2px; }
.h { font-size: 15px; font-weight: 700; }
.red { background: #f8e9e9; }
.pur { background: #f1edf7; font-size: 13px; }
.blu { background: #e8f0fa; }
.note { background: linear-gradient(45deg, transparent 50%, #e81123 50%) right top / 6px 6px no-repeat #e8f0fa; }

/* objects floating over the cells */
.ranges { position: absolute; left: 0; top: 0; }
.chart { position: absolute; left: 520px; top: 59px; font-size: 11px; fill: #595959; }
.ctitle { font-size: 19px; text-anchor: middle; }
.axis { text-anchor: end; }
.val { text-anchor: middle; fill: #404040; }
.cat { text-anchor: middle; font-size: 12px; }
.leg { font-size: 12px; }
.chart-tools { position: absolute; left: 1164px; top: 68px; display: flex; flex-direction: column; gap: 10px; }
.chart-tools button { display: flex; align-items: center; justify-content: center; width: 28px; height: 28px; background: #fff; border: 1px solid #ababab; }
.cursor { position: absolute; left: 1036px; top: 484px; }
.ime {
  position: absolute;
  right: 349px;
  bottom: 8px;
  display: flex;
  align-items: center;
  justify-content: center;
  gap: 4px;
  width: 62px;
  height: 26px;
  border-radius: 5px;
  background: #fff;
  box-shadow: 0 0 4px #444;
  color: #333;
  font-size: 13px;
}
.mark { position: absolute; right: 1px; bottom: 3px; display: flex; align-items: center; opacity: .8; }
.mark-text { font-size: 21px; line-height: 24px; color: #4f93dd; white-space: nowrap; }
.mark-text b { display: block; }
.mark-text span { display: block; font: 17px/20px "Liberation Sans", sans-serif; color: #4cc078; -webkit-text-stroke: 1px #4cc078; }

.vscroll { width: 10px; padding: 11px 0 0 3px; display: flex; flex-direction: column; }
.vscroll button { height: 16px; flex: none; background: #fff; border: 1px solid #ababab; border-right: 0; display: flex; align-items: center; justify-content: flex-end; }
.thumb { height: 190px; background: #fff; border: 1px solid #ababab; border-right: 0; }
.track { flex: 1; background: #dadada; }

.sheet-tabs { display: flex; flex: none; height: 2px; }
.before { width: 303px; border-top: 1px solid #999; border-right: 1px solid #999; }
.current { width: 115px; background: #fff; }
.after { flex: 1; border-top: 1px solid #999; border-left: 1px solid #999; margin-right: 10px; }
```
